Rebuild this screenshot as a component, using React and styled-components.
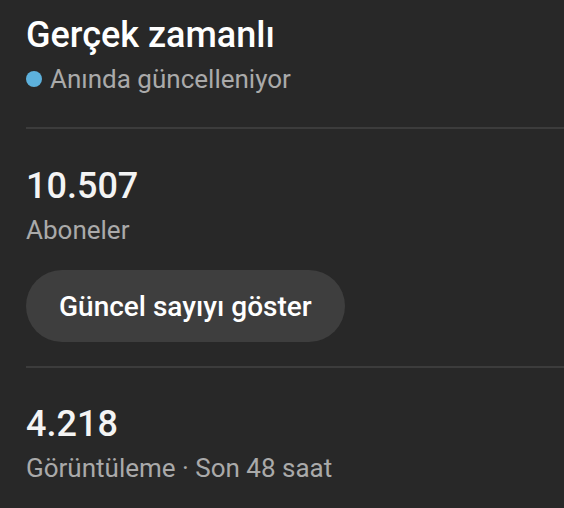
import styled, { createGlobalStyle } from "styled-components";

const GlobalStyle = createGlobalStyle`
  html, body {
    margin: 0;
    padding: 0;
    background: #282828;
  }
  body {
    font-family: Roboto, "Noto Sans", sans-serif;
    -webkit-font-smoothing: antialiased;
  }
`;

const Page = styled.div`
  width: 564px;
  height: 508px;
  overflow: hidden;
  background: #282828;
  color: #f1f1f1;
  padding-left: 26px;
  box-sizing: border-box;
`;

const Header = styled.div`
  padding-top: 13px;
  padding-bottom: 32px;
  display: flex;
  flex-direction: column;
  gap: 6px;
`;

const Title = styled.h1`
  margin: 0;
  font-size: 36px;
  line-height: 44px;
  font-weight: 500;
  color: #ffffff;
`;

const Live = styled.div`
  display: flex;
  align-items: center;
  gap: 8px;
  font-size: 26px;
  line-height: 32px;
  color: #aaaaaa;
`;

const Dot = styled.span`
  width: 16px;
  height: 16px;
  border-radius: 50%;
  background: #5db1dc;
  flex-shrink: 0;
`;

const Divider = styled.hr`
  margin: 0;
  border: none;
  height: 2px;
  background: #3c3c3c;
`;

const Stat = styled.section`
  padding-top: ${(p) => p.$top}px;
  padding-bottom: ${(p) => p.$bottom}px;
  display: flex;
  flex-direction: column;
  align-items: flex-start;
`;

const Value = styled.div`
  font-size: 36px;
  line-height: 44px;
  font-weight: 500;
  color: #f4f4f4;
`;

const Label = styled.div`
  margin-top: 6px;
  font-size: 26px;
  line-height: 32px;
  color: #aaaaaa;
`;

const Pill = styled.button`
  margin-top: 24px;
  height: 72px;
  padding: 0 33px;
  border: none;
  border-radius: 36px;
  background: #3e3e3e;
  color: #ffffff;
  font-family: Roboto, "Noto Sans", sans-serif;
  font-size: 28px;
  font-weight: 500;
  cursor: pointer;
`;

const App = () => {
  return (
    <>
      <GlobalStyle />
      <Page>
        <Header>
          <Title>Gerçek zamanlı</Title>
          <Live>
            <Dot />
            Anında güncelleniyor
          </Live>
        </Header>
        <Divider />
        <Stat $top={35} $bottom={24}>
          <Value>10.507</Value>
          <Label>Aboneler</Label>
          <Pill>Güncel sayıyı göster</Pill>
        </Stat>
        <Divider />
        <Stat $top={34} $bottom={0}>
          <Value>4.218</Value>
          <Label>Görüntüleme · Son 48 saat</Label>
        </Stat>
      </Page>
    </>
  );
};

export default App;
